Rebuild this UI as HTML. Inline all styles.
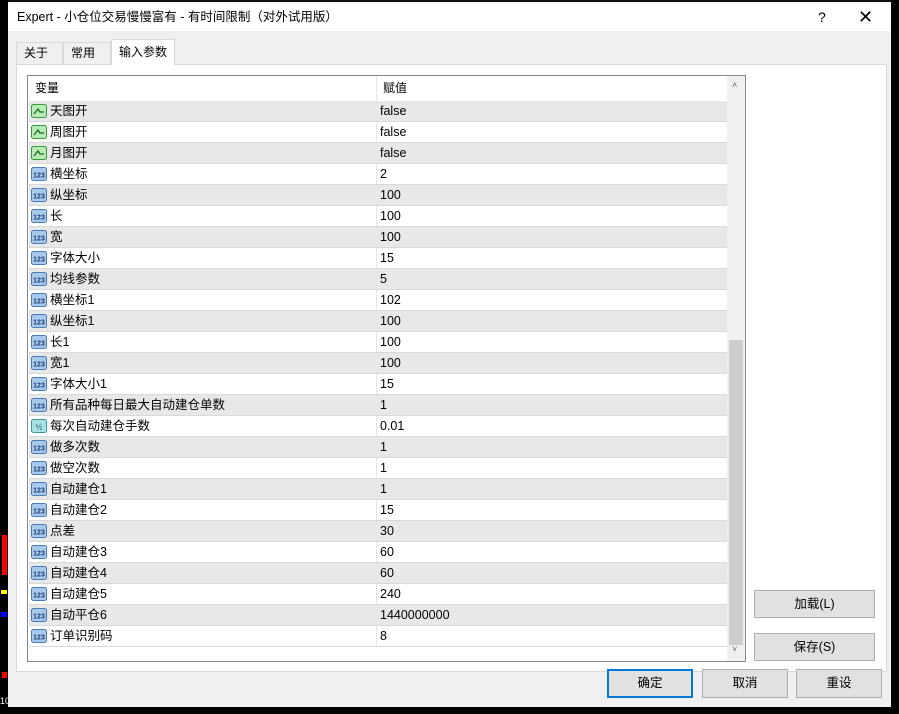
<!DOCTYPE html>
<html><head><meta charset="utf-8"><style>
*{margin:0;padding:0;box-sizing:border-box}
body{width:899px;height:714px;background:#000;position:relative;overflow:hidden;font-family:"Liberation Sans","Noto Sans CJK SC","Microsoft YaHei",sans-serif;font-size:12px;color:#000}
.dlg{position:absolute;left:8px;top:0;width:883px;height:707px;background:#f0f0f0}
.title{position:absolute;left:0;top:2px;width:883px;height:29px;background:#fff;font-size:12.5px;line-height:31px;padding-left:9px}
.title .q{position:absolute;left:810px;top:0;font-size:14px}
.title .x{position:absolute;left:850px;top:0;font-size:18px;font-weight:normal}
.tab{position:absolute;top:42px;height:23px;border:1px solid #d9d9d9;border-bottom:none;background:#f0f0f0;line-height:21px;padding-left:7px;font-size:12px}
.tab.act{top:39px;height:26px;background:#fff;line-height:24px;border-color:#d9d9d9}
.panel{position:absolute;left:8px;top:64px;width:871px;height:608px;background:#fff;border:1px solid #d9d9d9}
.grid{position:absolute;left:19px;top:75px;width:719px;height:587px;border:1px solid #828790;background:#fff;overflow:hidden}
.hdr{position:absolute;left:0;top:0;width:700px;height:25px;background:#fff;line-height:24px}
.hdr span{position:absolute}
.vline{position:absolute;left:348px;top:0;width:1px;height:570px;background:#e5e5e5}
.row{position:absolute;left:1px;width:698px;height:21px;border-bottom:1px solid #d9d9d9;line-height:20px;font-size:12.5px}
.row.s{background:#e8e8e8}
.row .n{position:absolute;left:21px}
.row .v{position:absolute;left:351px}
.row svg{position:absolute;left:2px;top:2px}
.sb{position:absolute;left:699px;top:0;width:18px;height:585px;background:#f0f0f0}
.thumb{position:absolute;left:2px;top:264px;width:14px;height:305px;background:#cdcdcd}
.btn{position:absolute;background:#e1e1e1;border:1px solid #adadad;text-align:center;font-size:12.5px}
</style></head><body>
<div style="position:absolute;left:0;top:400px;width:8px;height:300px">
<div style="position:absolute;left:2px;top:135px;width:5px;height:40px;background:#f00"></div>
<div style="position:absolute;left:1px;top:190px;width:6px;height:4px;background:#ff0"></div>
<div style="position:absolute;left:1px;top:212px;width:6px;height:5px;background:#00f"></div>
<div style="position:absolute;left:2px;top:272px;width:5px;height:6px;background:#f00"></div>
<div style="position:absolute;left:0;top:296px;font-size:9px;color:#fff">10</div>
</div>
<div class="dlg">
<div style="position:absolute;left:0;top:0;width:883px;height:2px;background:#111"></div>
<div class="title">Expert - 小仓位交易慢慢富有 - 有时间限制（对外试用版）<span class="q">?</span><span class="x">✕</span></div>
<div class="tab" style="left:8px;width:47px">关于</div>
<div class="tab" style="left:55px;width:48px">常用</div>
<div class="panel"></div>
<div class="tab act" style="left:103px;width:64px">输入参数</div>
<div class="grid">
<div class="hdr"><span style="left:7px">变量</span><span style="left:355px">赋值</span></div>
<div class="vline"></div>
<div id="rows"></div>
<div class="sb"><div style="position:absolute;left:5px;top:4px;font-size:9px;color:#606060">&#x2C4;</div><div class="thumb"></div><div style="position:absolute;left:5px;top:568px;font-size:9px;color:#606060">&#x2C5;</div></div>
</div>
<div class="btn" style="left:746px;top:590px;width:121px;height:28px;line-height:26px">加载(L)</div>
<div class="btn" style="left:746px;top:633px;width:121px;height:28px;line-height:26px">保存(S)</div>
<div class="btn" style="left:599px;top:669px;width:86px;height:29px;line-height:25px;border:2px solid #0078d7">确定</div>
<div class="btn" style="left:694px;top:669px;width:86px;height:29px;line-height:27px">取消</div>
<div class="btn" style="left:788px;top:669px;width:86px;height:29px;line-height:27px">重设</div>
</div>
<script>
var d=[["天图开","false",1],["周图开","false",1],["月图开","false",1],["横坐标","2"],["纵坐标","100"],["长","100"],["宽","100"],["字体大小","15"],["均线参数","5"],["横坐标1","102"],["纵坐标1","100"],["长1","100"],["宽1","100"],["字体大小1","15"],["所有品种每日最大自动建仓单数","1"],["每次自动建仓手数","0.01",2],["做多次数","1"],["做空次数","1"],["自动建仓1","1"],["自动建仓2","15"],["点差","30"],["自动建仓3","60"],["自动建仓4","60"],["自动建仓5","240"],["自动平仓6","1440000000"],["订单识别码","8"]];
var g='<svg width="16" height="16"><rect x="0.5" y="1.5" width="15" height="13" rx="2" fill="#b9eab9" stroke="#3a9a3a"/><path d="M3 11 L7 6 L9 9 L13 9" stroke="#1a6a1a" fill="none" stroke-width="1.3"/></svg>';
var b='<svg width="16" height="16"><rect x="0.5" y="1.5" width="15" height="13" rx="2" fill="#a9c9ec" stroke="#4a7ab8"/><text x="8" y="11.5" font-size="7" font-family="Liberation Sans" font-weight="bold" fill="#1a3a7a" text-anchor="middle">123</text></svg>';
var h='<svg width="16" height="16"><rect x="0.5" y="1.5" width="15" height="13" rx="2" fill="#a9e4e4" stroke="#3a9a9a"/><text x="8" y="11.5" font-size="8" font-family="Liberation Sans" fill="#1a4a6a" text-anchor="middle">½</text></svg>';
var s='';
for(var i=0;i<d.length;i++){var r=d[i];s+='<div class="row'+(i%2==0?' s':'')+'" style="top:'+(25+i*21)+'px">'+(r[2]==1?g:r[2]==2?h:b)+'<span class="n">'+r[0]+'</span><span class="v">'+r[1]+'</span></div>';}
document.getElementById('rows').innerHTML=s;
</script>
</body></html>
